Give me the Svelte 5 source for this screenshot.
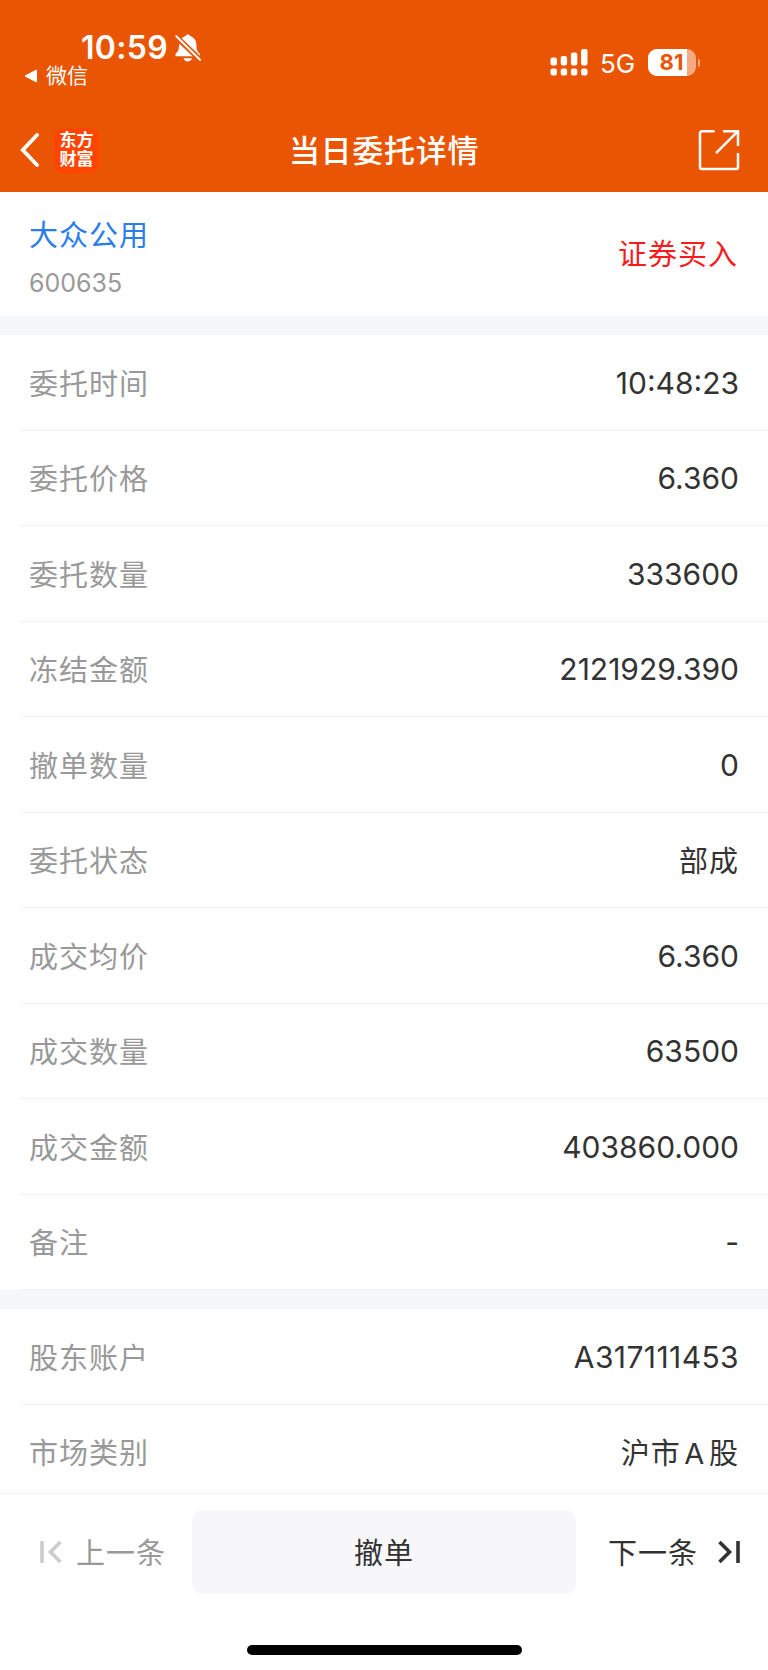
<script>
    const stock = { name: '大众公用', code: '600635', side: '证券买入' };

    const groups = [
        [
            { label: '委托时间', value: '10:48:23' },
            { label: '委托价格', value: '6.360' },
            { label: '委托数量', value: '333600' },
            { label: '冻结金额', value: '2121929.390' },
            { label: '撤单数量', value: '0' },
            { label: '委托状态', value: '部成', cjk: true },
            { label: '成交均价', value: '6.360' },
            { label: '成交数量', value: '63500' },
            { label: '成交金额', value: '403860.000' },
            { label: '备注', value: '-' }
        ],
        [
            { label: '股东账户', value: 'A317111453', account: true },
            { label: '市场类别', value: '沪市 A 股', cjk: true }
        ]
    ];

    const battery = 81;
    // top of each upper signal bar
    const signal = [8.5, 7, 3.5, 0];
</script>


<main>
    <header>
        <div class="status">
            <div class="status-left">
                <div class="clock">
                    <span class="time">10:59</span>
                    <svg width="26" height="28" viewBox="0 0 26 28">
                        <path fill="#fff" d="M0.500 22.200V20c1.300-1.600 2.800-2.600 3.200-5.200C4.200 11 4 7.800 6.300 5 7.600 3.300 9.100 2.500 10.500 2.100 11-.2 14.500-.2 15 2.100c4.300 1.200 6.300 4.500 6.400 8.700.1 5.300.7 6.700 3.600 9.200v2.200z" />
                        <path fill="#fff" d="M8.600 24.300h8.300c-.6 4.200-7.700 4.200-8.300 0z" />
                        <path stroke="#ea5504" stroke-width="5.500" d="M-1 .7 26.500 27" />
                        <path stroke="#fff" stroke-width="2" stroke-linecap="round" d="M1.300 2.200 25 25.700" />
                    </svg>
                </div>
                <div class="return">
                    <svg width="14" height="14" viewBox="0 0 14 14">
                        <path fill="#fff" stroke="#fff" stroke-linejoin="round" d="M1 7 12.500 1v12z" />
                    </svg>
                    <span>微信</span>
                </div>
            </div>
            <div class="status-right">
                <svg width="38" height="27" viewBox="0 0 38 27">
                    {#each signal as top, i}
                        <rect x={0.5 + i * 10.2} y={top} width="6.400" height={16.5 - top} rx="2" fill="#fff" />
                        <rect x={0.5 + i * 10.2} y="19.500" width="6.400" height="7" rx="2" fill="#fff" />
                    {/each}
                </svg>
                <span class="network">5G</span>
                <div class="battery">
                    <div class="level" style="width: {battery}%"></div>
                    <span>{battery}</span>
                </div>
                <div class="battery-cap"></div>
            </div>
        </div>
        <nav>
            <div class="nav-left">
                <svg width="20" height="34" viewBox="0 0 20 34">
                    <path fill="none" stroke="#fff" stroke-width="3.800" stroke-linecap="round" d="M17 2 2.800 17 17 32" />
                </svg>
                <div class="logo"><span>东方</span><span>财富</span></div>
            </div>
            <h1>当日委托详情</h1>
            <svg class="share" width="42" height="42" viewBox="0 0 42 42">
                <g fill="none" stroke="#fff" stroke-width="2.500">
                    <path d="M16.500 2.200H4a2 2 0 0 0-2 2V38a2 2 0 0 0 2 2h34a2 2 0 0 0 2-2V24" />
                    <path d="M25 2.200h15V17M39.500 2.700 18 24.200" />
                </g>
            </svg>
        </nav>
    </header>

    <section class="stock">
        <div>
            <div class="name">{stock.name}</div>
            <div class="code">{stock.code}</div>
        </div>
        <div class="side">{stock.side}</div>
    </section>

    <div class="details">
        {#each groups as rows}
            <section class="group">
                {#each rows as row}
                    <div class="row">
                        <span class="label">{row.label}</span>
                        <span class="value" class:cjk={row.cjk} class:account={row.account}>{row.value}</span>
                    </div>
                {/each}
            </section>
        {/each}
    </div>

    <footer>
        <div class="actions">
            <button class="step prev" disabled>
                <svg width="22" height="24" viewBox="0 0 22 24">
                    <path fill="none" stroke="#ccc" stroke-width="3.600" d="M2 1v22M20.500 2 10.500 12l10 10" />
                </svg>
                <span>上一条</span>
            </button>
            <button class="cancel">撤单</button>
            <button class="step next">
                <span>下一条</span>
                <svg width="22" height="24" viewBox="0 0 22 24">
                    <path fill="none" stroke="#333" stroke-width="3.600" d="M20 1v22M1.500 2l10 10-10 10" />
                </svg>
            </button>
        </div>
        <div class="home-bar"></div>
    </footer>
</main>


<style>
    :global(body) {
        margin: 0;
        background: #fff;
    }

    main {
        display: flex;
        flex-direction: column;
        width: 768px;
        height: 1670px;
        overflow: hidden;
        font-family: Inter, "Noto Sans CJK SC", sans-serif;
        color: #333;
        background: #fff;
    }

    svg {
        display: block;
        flex: none;
    }

    header {
        flex: none;
        height: 192px;
        box-sizing: border-box;
        color: #fff;
        background: #ea5504;
    }

    .status {
        display: flex;
        justify-content: space-between;
        height: 108px;
        padding: 0 68px 0 24px;
    }

    .status-left {
        padding-top: 32px;
    }

    .clock {
        display: flex;
        align-items: center;
        gap: 7px;
        height: 32px;
        padding-left: 57px;
    }

    .time {
        font-size: 32px;
        font-weight: 600;
        line-height: 32px;
        letter-spacing: 0.3px;
    }

    .return {
        display: flex;
        align-items: center;
        gap: 8px;
        height: 24px;
        font-size: 21px;
        line-height: 24px;
    }

    .status-right {
        display: flex;
        align-items: center;
        height: 27px;
        padding-top: 49px;
    }

    .network {
        width: 47px;
        padding-left: 12px;
        padding-right: 1px;
        padding-top: 1px;
        font-size: 26px;
    }

    .battery {
        position: relative;
        width: 48px;
        height: 27px;
        overflow: hidden;
        border-radius: 9px;
        background: #f5aa82;
    }

    .level {
        height: 100%;
        background: #fff;
    }

    .battery span {
        position: absolute;
        inset: 0;
        padding-right: 1px;
        text-align: center;
        font-size: 22px;
        font-weight: 700;
        line-height: 27px;
        color: #ea5504;
    }

    .battery-cap {
        width: 2px;
        height: 8px;
        margin-left: 2px;
        border-radius: 0 3px 3px 0;
        background: #f5aa82;
    }

    nav {
        display: flex;
        align-items: center;
        justify-content: space-between;
        height: 84px;
        padding: 0 28px 0 20px;
    }

    .nav-left {
        display: flex;
        align-items: center;
        gap: 14px;
        width: 50px;
    }

    .logo {
        display: flex;
        flex: none;
        flex-direction: column;
        align-items: center;
        justify-content: center;
        width: 45px;
        height: 45px;
        border-radius: 9px;
        font-size: 17px;
        font-weight: 700;
        line-height: 19px;
        background: #ff4500;
    }

    h1 {
        margin: 0;
        padding-bottom: 4px;
        font-size: 31px;
        font-weight: 500;
        letter-spacing: 0.7px;
    }

    .stock {
        display: flex;
        flex: none;
        align-items: center;
        justify-content: space-between;
        height: 124px;
        padding: 0 30px 0 29px;
        font-size: 29px;
        box-sizing: border-box;
    }

    .name {
        padding-top: 5px;
        line-height: 42px;
        letter-spacing: 1px;
        color: #2b7de9;
    }

    .code {
        padding-top: 10px;
        font-size: 25px;
        line-height: 32px;
        color: #999;
    }

    .side {
        padding-bottom: 4px;
        letter-spacing: 1px;
        color: #fa1c1c;
    }

    .details {
        flex: 1;
        min-height: 0;
        overflow: hidden;
    }

    .group {
        border-top: 19px solid #f6f7f9;
    }

    .row {
        display: flex;
        align-items: center;
        justify-content: space-between;
        height: 95.500px;
        margin-left: 20px;
        padding: 0 29px 0 9px;
        box-sizing: border-box;
        border-bottom: 1px solid #f3f3f4;
    }

    .label {
        padding-bottom: 1px;
        font-size: 29px;
        letter-spacing: 1px;
        color: #999;
    }

    .value {
        padding-top: 1px;
        font-size: 30px;
    }

    .value.account {
        letter-spacing: 0.4px;
    }

    .value.cjk {
        padding-top: 0;
        padding-bottom: 2px;
        font-size: 29px;
        letter-spacing: 1px;
        word-spacing: -5.500px;
    }

    footer {
        flex: none;
        height: 177px;
        box-sizing: border-box;
        border-top: 1px solid #f3f3f4;
        background: #fff;
    }

    .actions {
        display: flex;
        align-items: center;
        height: 84px;
        padding-top: 16px;
    }

    button {
        padding: 0;
        border: 0;
        font: inherit;
        font-size: 29px;
        letter-spacing: 1px;
        color: #333;
        background: none;
    }

    .step {
        display: flex;
        align-items: center;
        width: 192px;
    }

    .step span {
        padding-bottom: 2px;
    }

    .prev {
        padding-left: 40px;
        gap: 14px;
        color: #999;
    }

    .next {
        padding-left: 32px;
        gap: 20px;
    }

    .cancel {
        width: 384px;
        height: 84px;
        padding-bottom: 2px;
        border-radius: 10px;
        background: #f7f7fa;
    }

    .home-bar {
        width: 275px;
        height: 10px;
        margin: 51px auto 0;
        border-radius: 5px;
        background: #000;
    }
</style>
